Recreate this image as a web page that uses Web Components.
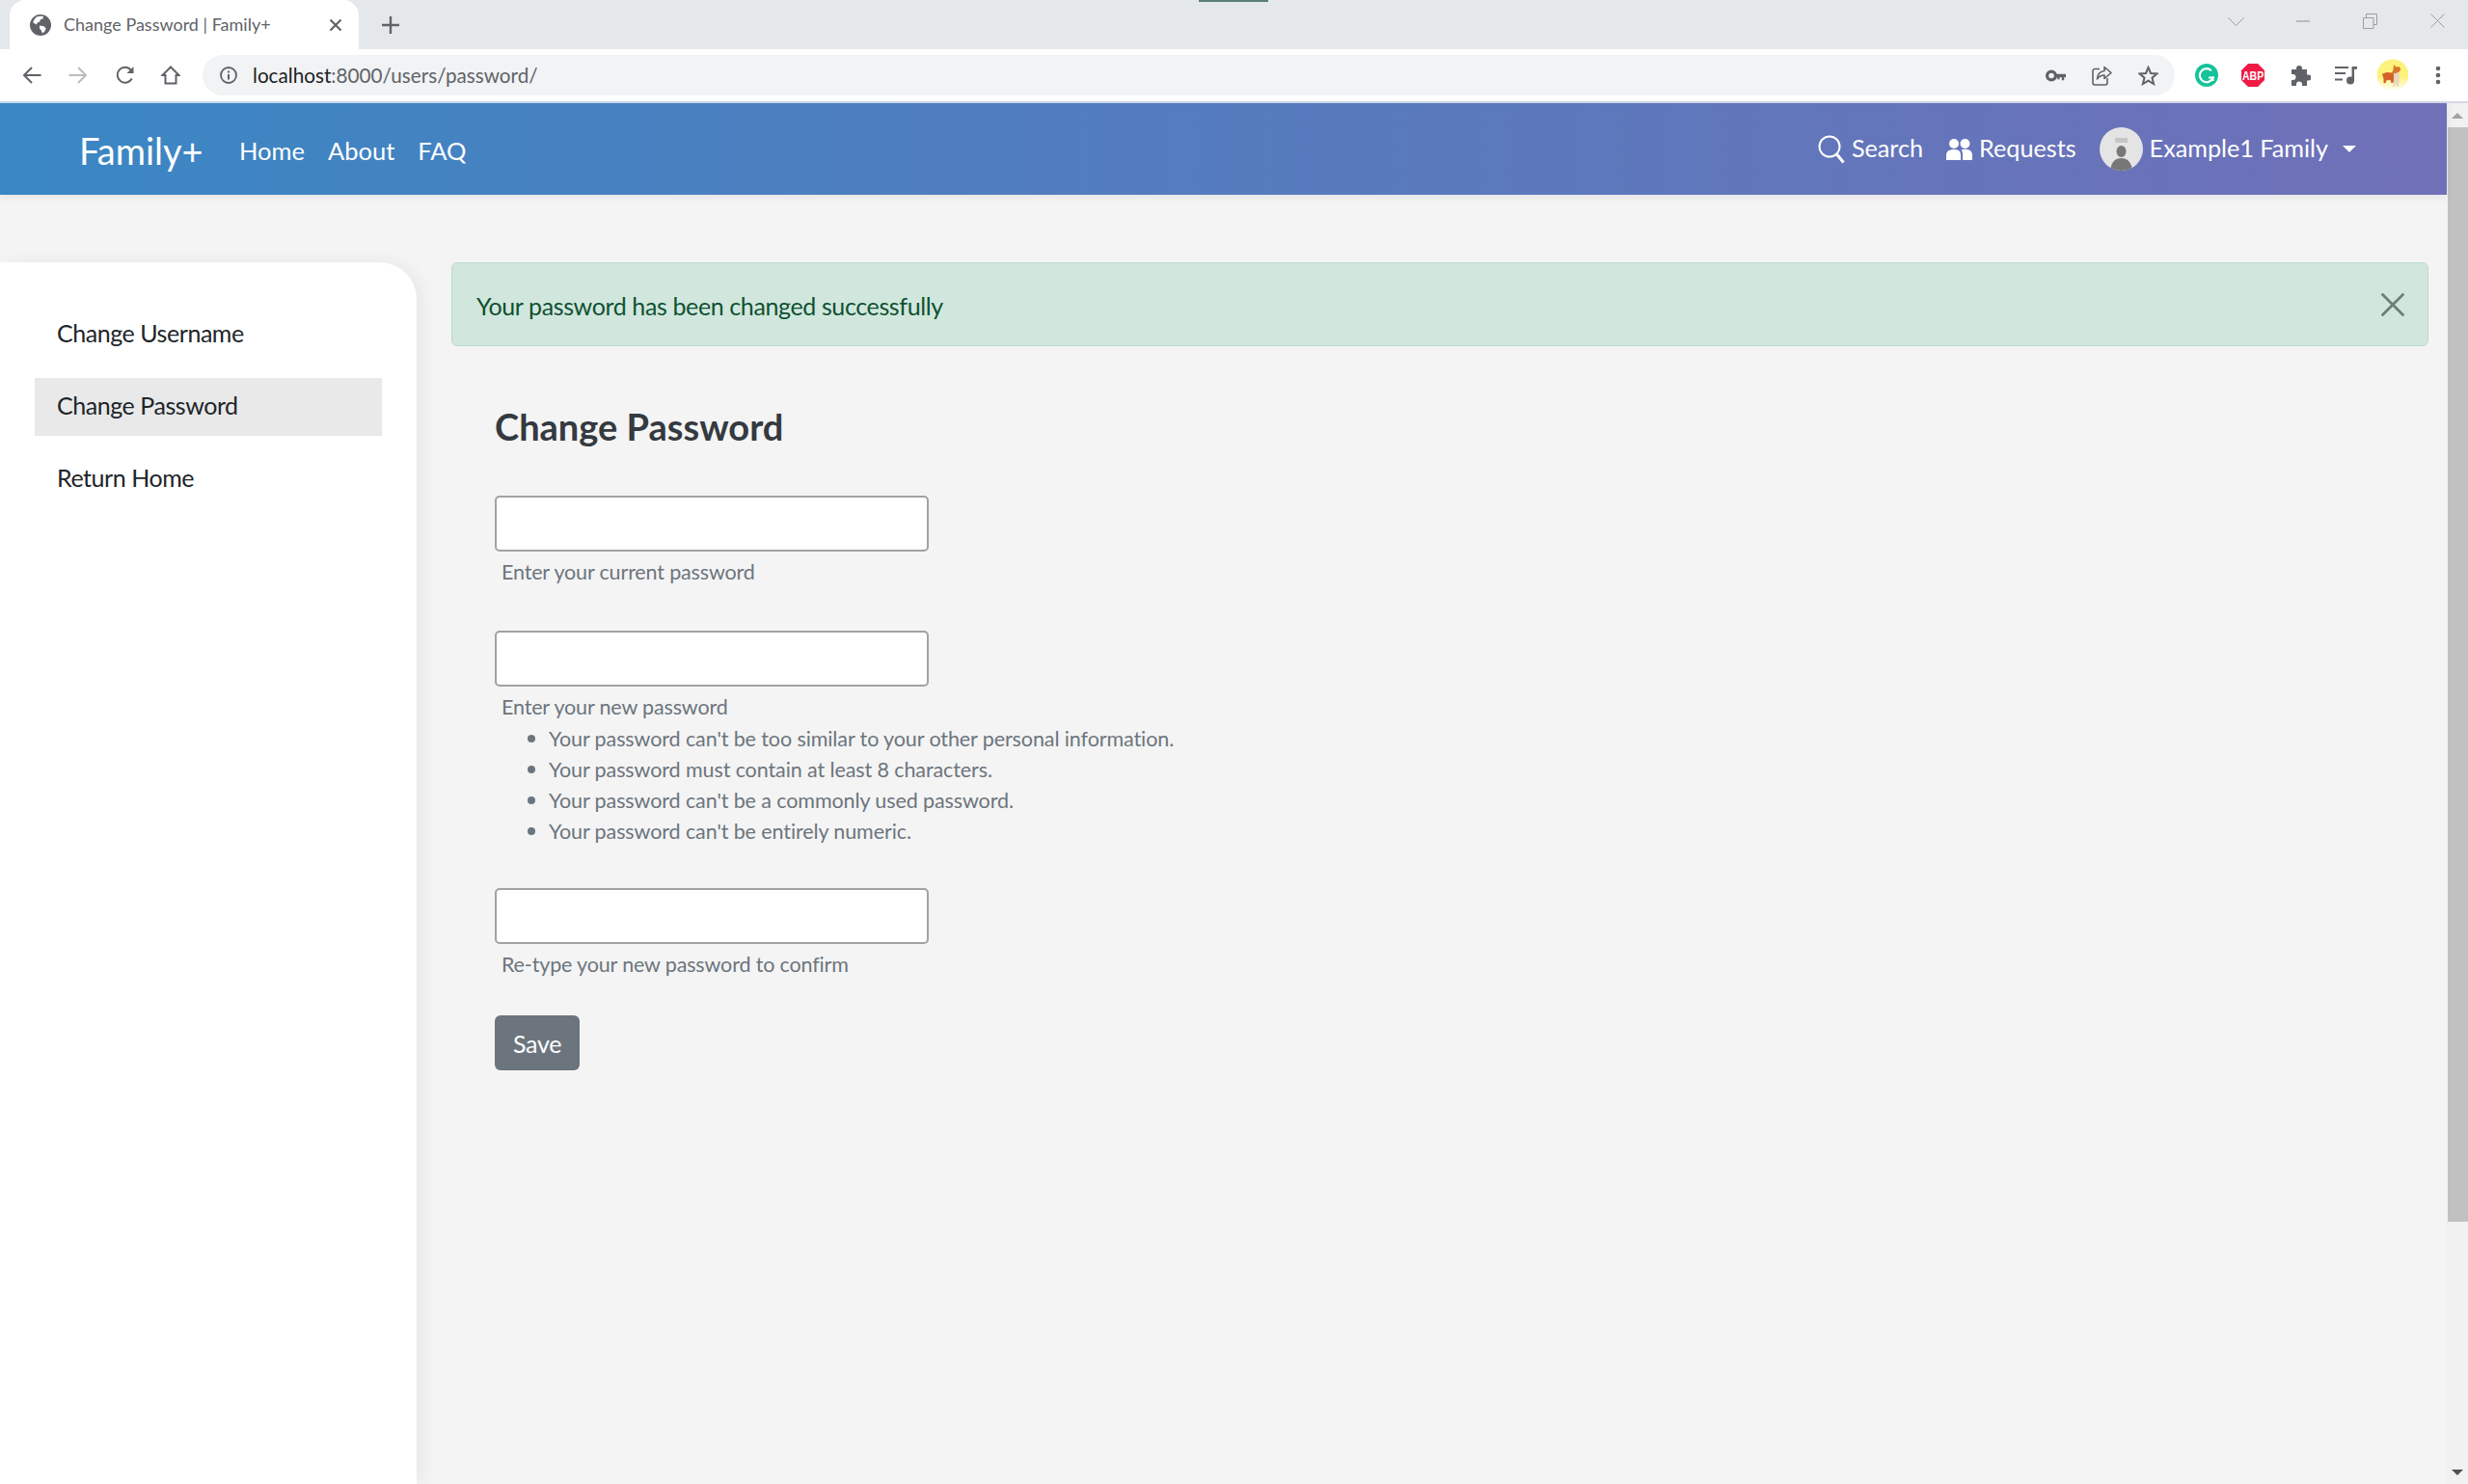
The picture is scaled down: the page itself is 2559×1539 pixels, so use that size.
<!DOCTYPE html>
<html lang="en">
<head>
<meta charset="utf-8">
<title>Change Password | Family+</title>
<style>
  html, body { margin: 0; height: 100%; overflow: hidden; background: #f4f4f4; }
  body { display: flex; flex-direction: column; font-family: Lato, "Open Sans", sans-serif; }
  .viewport { flex: 1; min-height: 0; display: flex; }
  .page { flex: 1; min-width: 0; display: flex; flex-direction: column; }
  .content { flex: 1; min-height: 0; display: flex; }
</style>
</head>
<body>
<browser-chrome title-text="Change Password | Family+" url-host="localhost" url-path=":8000/users/password/"></browser-chrome>
<div class="viewport">
  <div class="page">
    <app-navbar></app-navbar>
    <div class="content">
      <side-nav></side-nav>
      <main-panel>
        <alert-box>Your password has been changed successfully</alert-box>
        <password-form></password-form>
      </main-panel>
    </div>
  </div>
  <page-scrollbar></page-scrollbar>
</div>

<script>
/** Browser tab strip and toolbar */
class BrowserChrome extends HTMLElement {
  constructor() {
    super();
    this.attachShadow({ mode: 'open' });
    const title = this.getAttribute('title-text');
    const host = this.getAttribute('url-host');
    const path = this.getAttribute('url-path');
    this.shadowRoot.innerHTML = `
      <style>
        :host { display: block; height: 107px; font-family: Lato, "Open Sans", sans-serif; flex: none; }
        svg { display: block; flex: none; }
        .strip { height: 51px; background: #e5e8eb; display: flex; align-items: flex-start; position: relative; }
        .sliver { position: absolute; left: 1243px; top: 0; width: 72px; height: 2px; background: #587f74; }
        .tab { margin-left: 10px; width: 362px; height: 51px; background: #fff; border-radius: 16px 16px 0 0; display: flex; align-items: center; box-sizing: border-box; padding-left: 21px; }
        .tab-title { margin-left: 13px; width: 275px; font-size: 18px; color: #5f6368; white-space: nowrap; padding-bottom: 1px; }
        .plus { margin: 17px 0 0 24px; }
        .win { margin-left: auto; display: flex; align-items: flex-start; padding: 14px 24px 0 0; }
        .toolbar { height: 54px; background: #fff; display: flex; align-items: center; padding-left: 23px; box-sizing: border-box; }
        .omnibox { margin-left: 23px; width: 2045px; height: 42px; background: #f1f3f4; border-radius: 21px; display: flex; align-items: center; box-sizing: border-box; padding-left: 18px; }
        .url { margin-left: 16px; font-size: 20.700px; color: #5f6368; white-space: nowrap; padding-bottom: 1px; }
        .url b { font-weight: 400; color: #202124; }
        .omni-icons { margin-left: auto; display: flex; align-items: center; padding-right: 17px; gap: 27px; }
        .ext { display: flex; align-items: center; margin-left: 21px; }
        .rule { height: 2px; background: linear-gradient(90deg, #c6dcec, #d6d7ea); }
      </style>
      <div class="strip">
        <div class="sliver"></div>
        <div class="tab">
          <svg width="22" height="22" viewBox="0 0 22 22"><circle cx="11" cy="11" r="11" fill="#5f6368"/><path d="M7 2.500c2-.9 5-1.200 7-.4l-.6 2.400-2.600.7-.5 2.200-2.600 1-.7 2.200L3.300 8.500C3.800 6 5 4 7 2.500ZM10 11.500l4.500.7 2.200 2.300-1.500 3.300-2.200 1.800-1.400-3.300L10 14.500Z" fill="#fff"/></svg>
          <span class="tab-title">${title}</span>
          <svg width="14" height="14" viewBox="0 0 14 14"><path d="M1.500 1.500l11 11M12.500 1.500l-11 11" stroke="#5f6368" stroke-width="2.200"/></svg>
        </div>
        <svg class="plus" width="18" height="18" viewBox="0 0 18 18"><path d="M9 0v18M0 9h18" stroke="#5f6368" stroke-width="2.400"/></svg>
        <div class="win">
          <svg width="17" height="9" viewBox="0 0 17 9" style="margin-top:4px"><path d="M.5.500L8.500 8.500 16.500.500" fill="none" stroke="#9a9ea2" stroke-width="1"/></svg>
          <svg width="14" height="2" viewBox="0 0 14 2" style="margin:7px 0 0 54px"><path d="M0 1h14" stroke="#9a9ea2" stroke-width="1.200"/></svg>
          <svg width="15" height="16" viewBox="0 0 15 16" style="margin-left:55px"><path d="M.5 4.500h10.500v11H.5zM3.500 4.500V.5h11v11H11" fill="none" stroke="#9a9ea2" stroke-width="1"/></svg>
          <svg width="15" height="15" viewBox="0 0 15 15" style="margin-left:55px"><path d="M.5.500l14 14M14.500.500l-14 14" stroke="#9a9ea2" stroke-width="1"/></svg>
        </div>
      </div>
      <div class="toolbar">
        <svg width="20" height="20" viewBox="0 0 20 20"><path d="M19.500 10H2M10 2l-8 8 8 8" fill="none" stroke="#5f6368" stroke-width="2"/></svg>
        <svg width="20" height="20" viewBox="0 0 20 20" style="margin-left:28px"><path d="M.5 10H18M10 2l8 8-8 8" fill="none" stroke="#babcbe" stroke-width="2"/></svg>
        <svg width="20" height="20" viewBox="0 0 20 20" style="margin-left:29px"><path d="M16.800 13.500A8 8 0 1 1 15.800 4.500" fill="none" stroke="#5f6368" stroke-width="2"/><path d="M18.500 1v7h-7z" fill="#5f6368"/></svg>
        <svg width="20" height="20" viewBox="0 0 20 20" style="margin-left:27px"><path d="M10 1.500L18.500 10H15.500v8.500h-11V10H1.500z" fill="none" stroke="#5f6368" stroke-width="2"/></svg>
        <div class="omnibox">
          <svg width="18" height="18" viewBox="0 0 18 18"><circle cx="9" cy="9" r="8" fill="none" stroke="#5f6368" stroke-width="1.800"/><path d="M9 8v5.500M9 4.500v2" stroke="#5f6368" stroke-width="2"/></svg>
          <span class="url"><b>${host}</b>${path}</span>
          <div class="omni-icons">
            <svg width="21" height="13" viewBox="0 0 21 13"><circle cx="6" cy="6.500" r="4.400" fill="none" stroke="#5f6368" stroke-width="3.200"/><path d="M9 4.800h12v3.400h-1.800v3h-2.400v-3H14.500v2h-2.300v-2H9z" fill="#5f6368"/></svg>
            <svg width="21" height="21" viewBox="0 0 21 21"><path d="M8 3.500H3a2 2 0 0 0-2 2V18a2 2 0 0 0 2 2h11a2 2 0 0 0 2-2v-5" fill="none" stroke="#5f6368" stroke-width="1.600"/><path d="M13 1.500l7 6-7 6V10c-3.500 0-5.500 1-7.500 4 .3-4.500 3-8 7.500-8.500z" fill="none" stroke="#5f6368" stroke-width="1.600" stroke-linejoin="round"/></svg>
            <svg width="21" height="21" viewBox="0 0 21 21"><path d="M10.500 2l2.500 6 6.500.5-5 4.200 1.600 6.300-5.600-3.400L4.900 19l1.600-6.300-5-4.200 6.500-.5z" fill="none" stroke="#5f6368" stroke-width="2"/></svg>
          </div>
        </div>
        <div class="ext">
          <svg width="24" height="24" viewBox="0 0 24 24"><circle cx="12" cy="12" r="12" fill="#15c39a"/><path d="M16.800 7.200A7 7 0 1 0 18.500 14.500H14" fill="none" stroke="#fff" stroke-width="2.200"/><path d="M18.500 13.500v4.500" stroke="#fff" stroke-width="2.200"/></svg>
          <svg width="24" height="24" viewBox="0 0 24 24" style="margin-left:24px"><path d="M7 0h10l7 7v10l-7 7H7l-7-7V7z" fill="#ef1b45"/><text x="1" y="13.800" transform="scale(1 1.220)" font-family="Liberation Sans, sans-serif" font-size="10.500" font-weight="700" fill="#fff">ABP</text></svg>
          <svg width="22" height="22" viewBox="0 0 22 22" style="margin-left:26px"><path d="M2 5h5V4a3 3 0 0 1 6 0v1h5v5.500h1.500a3 3 0 0 1 0 6H18V22h-5v-1.500a3 3 0 0 0-6 0V22H2v-6h1.500a3 3 0 0 0 0-6H2z" fill="#5f6368"/></svg>
          <svg width="23" height="21" viewBox="0 0 23 21" style="margin-left:25px"><path d="M0 2h14M0 8h11M0 14.500h8" stroke="#5f6368" stroke-width="2"/><path d="M18.800 1v14.500" stroke="#5f6368" stroke-width="2.500"/><path d="M18.500 1H23v2.800h-4.500z" fill="#5f6368"/><circle cx="16" cy="15.500" r="4" fill="#5f6368"/></svg>
          <svg width="32" height="34" viewBox="0 0 32 34" style="margin-left:21px">
            <defs><linearGradient id="sun" x1="0" y1="0" x2="0" y2="1"><stop offset=".55" stop-color="#fcf27d"/><stop offset="1" stop-color="#fff"/></linearGradient></defs>
            <circle cx="16" cy="17" r="16.500" fill="url(#sun)"/>
            <path d="M5 15.500l5-1.500 6 .5 2 3.500-.5 6.500-3 .5-1-3-4 .3-1 3H6.500L6.500 21z" fill="#d2622a"/>
            <path d="M15 15l1.500-4 .5-5 2.500 2.500 3-.5 2 3-2.500 3-3 2z" fill="#d9772f"/>
            <path d="M17 16l4-2 2 3-.5 6-.5 6h-2l-.5-4-2 4h-1.500L17 22z" fill="#e9d6bd"/>
          </svg>
          <svg width="6" height="20" viewBox="0 0 6 20" style="margin-left:28px"><circle cx="3" cy="3" r="2.300" fill="#5f6368"/><circle cx="3" cy="10" r="2.300" fill="#5f6368"/><circle cx="3" cy="17" r="2.300" fill="#5f6368"/></svg>
        </div>
      </div>
      <div class="rule"></div>
    `;
  }
}

/** Gradient navigation bar of the site */
class AppNavbar extends HTMLElement {
  constructor() {
    super();
    this.attachShadow({ mode: 'open' });
    this.shadowRoot.innerHTML = `
      <style>
        :host { display: flex; align-items: center; flex: none; height: 95px; box-sizing: border-box; padding: 0 94px 0 82px; color: #fff; font-family: Lato, "Open Sans", sans-serif; background: linear-gradient(90deg, #3a87c4, #7070b8); box-shadow: 0 2px 8px rgba(0,0,0,.08); position: relative; z-index: 2; }
        a { color: inherit; text-decoration: none; white-space: nowrap; }
        svg { display: block; flex: none; }
        .brand { font-size: 38px; width: 166px; padding-top: 2px; }
        .links { display: flex; font-size: 25.500px; gap: 24px; padding-top: 3px; }
        .right { margin-left: auto; display: flex; align-items: center; font-size: 25.200px; }
        .right a { padding-bottom: 3px; }
        .avatar { width: 45px; height: 45px; border-radius: 50%; overflow: hidden; margin: 0 7px 0 24px; }
        .caret { margin-left: 15px; width: 0; height: 0; border: 7.500px solid transparent; border-top: 7.500px solid #fff; border-bottom: 0; }
      </style>
      <a class="brand" href="#">Family+</a>
      <div class="links"><a href="#">Home</a><a href="#">About</a><a href="#">FAQ</a></div>
      <div class="right">
        <svg width="28" height="30" viewBox="0 0 28 30" style="margin-right:7px"><circle cx="12" cy="12" r="10.500" fill="none" stroke="#fff" stroke-width="2"/><path d="M19.500 20l7 8.500" stroke="#fff" stroke-width="3"/></svg>
        <a href="#">Search</a>
        <svg width="27" height="23" viewBox="0 0 27 23" style="margin:0 7px 0 24px"><circle cx="8" cy="6" r="5" fill="#fff"/><circle cx="19.500" cy="6" r="5" fill="#fff"/><path d="M0 23v-5c0-4 3-6 8-6s7 2 7 6v5zM17 23v-6c0-2-.5-3.500-1.500-4.500 1-.5 2.500-.7 4-.7 4.500 0 7.500 2 7.500 6v5.200z" fill="#fff"/></svg>
        <a href="#">Requests</a>
        <div class="avatar"><svg width="45" height="45" viewBox="0 0 45 45"><rect width="45" height="45" fill="#e4e4e4"/><rect x="16" y="11" width="13" height="5" fill="#c6c6c6"/><ellipse cx="22.500" cy="25" rx="5" ry="6" fill="#777"/><path d="M11 45c1-9 5-13 11.500-13S33 36 34 45z" fill="#777"/></svg></div>
        <a href="#">Example1 Family</a>
        <span class="caret"></span>
      </div>
    `;
  }
}

/** Left settings menu */
class SideNav extends HTMLElement {
  constructor() {
    super();
    this.attachShadow({ mode: 'open' });
    const items = ['Change Username', 'Change Password', 'Return Home'];
    this.shadowRoot.innerHTML = `
      <style>
        :host { display: flex; flex-direction: column; gap: 15px; flex: none; width: 432px; box-sizing: border-box; margin-top: 70px; padding: 45px 36px 0; background: #fff; border-top-right-radius: 38px; box-shadow: 6px 0 18px rgba(0,0,0,.05); font-family: Lato, "Open Sans", sans-serif; }
        a { display: flex; align-items: center; height: 60px; box-sizing: border-box; padding: 0 0 4px 23px; font-size: 25px; letter-spacing: -0.45px; color: #212529; text-decoration: none; }
        a.active { background: #e9e9e9; }
      </style>
      ${items.map((name, i) => `<a href="#" class="${i === 1 ? 'active' : ''}">${name}</a>`).join('')}
    `;
  }
}

class MainPanel extends HTMLElement {
  constructor() {
    super();
    this.attachShadow({ mode: 'open' });
    this.shadowRoot.innerHTML = `
      <style>
        :host { display: block; flex: 1; min-width: 0; padding: 70px 19px 0 36px; }
      </style>
      <slot></slot>
    `;
  }
}

/** Dismissible success message */
class AlertBox extends HTMLElement {
  constructor() {
    super();
    this.attachShadow({ mode: 'open' });
    this.shadowRoot.innerHTML = `
      <style>
        :host { display: flex; align-items: center; justify-content: space-between; height: 87px; box-sizing: border-box; padding: 0 24px 0 25px; background: #d1e7dd; border: 1px solid #badbcc; border-radius: 6px; color: #0f5132; font-family: Lato, "Open Sans", sans-serif; font-size: 25px; letter-spacing: -0.38px; }
        span { padding-top: 2px; }
      </style>
      <span><slot></slot></span>
      <svg width="24" height="24" viewBox="0 0 24 24"><path d="M1.500 1.500l21 21M22.500 1.500l-21 21" stroke="#6b7f75" stroke-width="2.800" stroke-linecap="round"/></svg>
    `;
  }
}

/** One password input with help text under it */
class PasswordField extends HTMLElement {
  constructor() {
    super();
    this.attachShadow({ mode: 'open' });
    this.shadowRoot.innerHTML = `
      <style>
        :host { display: block; }
        input { display: block; width: 450px; height: 58px; box-sizing: border-box; background: #fff; border: 2px solid #a2a2a2; border-radius: 5px; outline: none; }
        .help { margin-left: 7px; margin-top: 5px; padding-bottom: 1px; font-size: 21.500px; line-height: 32px; letter-spacing: -0.15px; color: #6c757d; }
      </style>
      <input type="password" aria-label="${this.getAttribute('help')}">
      <div class="help">${this.getAttribute('help')}</div>
      <slot></slot>
    `;
  }
}

/** The change password form */
class PasswordForm extends HTMLElement {
  constructor() {
    super();
    this.attachShadow({ mode: 'open' });
    const rules = [
      "Your password can't be too similar to your other personal information.",
      'Your password must contain at least 8 characters.',
      "Your password can't be a commonly used password.",
      "Your password can't be entirely numeric."
    ];
    this.shadowRoot.innerHTML = `
      <style>
        :host { display: block; padding: 60px 0 0 45px; font-family: Lato, "Open Sans", sans-serif; }
        h2 { margin: 0 0 48px; font-size: 38px; line-height: 47px; font-weight: 700; color: #343a40; }
        password-field { margin-bottom: 43px; }
        password-field.first { margin-bottom: 44px; }
        password-field.last { margin-bottom: 36px; }
        ul { margin: 0; padding: 0 0 0 34px; list-style: none; font-size: 21.500px; line-height: 32px; letter-spacing: -0.1px; color: #6c757d; }
        li { display: flex; align-items: center; gap: 14px; }
        li::before { content: ""; flex: none; width: 8px; height: 8px; border-radius: 50%; background: #6c757d; }
        button { display: block; width: 88px; height: 57px; padding: 0; background: #6c757d; color: #fff; border: 0; border-radius: 6px; font: inherit; font-size: 25px; letter-spacing: -0.3px; }
      </style>
      <h2>Change Password</h2>
      <password-field class="first" help="Enter your current password"></password-field>
      <password-field help="Enter your new password">
        <ul>${rules.map(r => `<li>${r}</li>`).join('')}</ul>
      </password-field>
      <password-field class="last" help="Re-type your new password to confirm"></password-field>
      <button type="button">Save</button>
    `;
  }
}

/** Classic scrollbar of the window */
class PageScrollbar extends HTMLElement {
  constructor() {
    super();
    this.attachShadow({ mode: 'open' });
    this.shadowRoot.innerHTML = `
      <style>
        :host { display: flex; flex-direction: column; flex: none; width: 22px; background: #f1f1f1; }
        .btn { height: 25px; flex: none; display: flex; align-items: center; justify-content: center; }
        .thumb { height: 1135px; flex: none; background: #c1c1c1; margin-left: 1px; }
        .rest { flex: 1; }
      </style>
      <div class="btn"><svg width="12" height="6" viewBox="0 0 12 6"><path d="M6 0l6 6H0z" fill="#a3a3a3"/></svg></div>
      <div class="thumb"></div>
      <div class="rest"></div>
      <div class="btn"><svg width="12" height="6" viewBox="0 0 12 6"><path d="M0 0h12L6 6z" fill="#505050"/></svg></div>
    `;
  }
}

customElements.define('browser-chrome', BrowserChrome);
customElements.define('app-navbar', AppNavbar);
customElements.define('side-nav', SideNav);
customElements.define('main-panel', MainPanel);
customElements.define('alert-box', AlertBox);
customElements.define('password-field', PasswordField);
customElements.define('password-form', PasswordForm);
customElements.define('page-scrollbar', PageScrollbar);
</script>
</body>
</html>
